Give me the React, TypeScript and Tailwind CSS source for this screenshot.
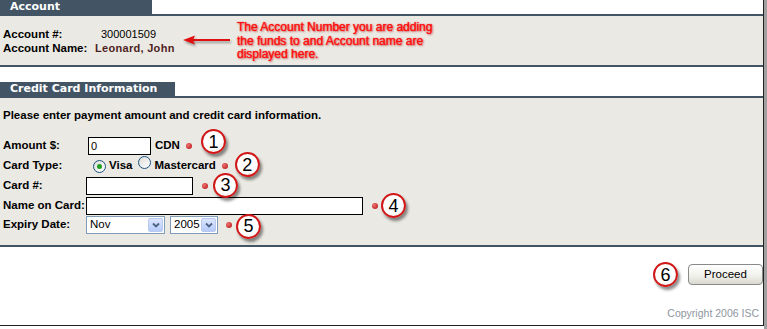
import React from "react";

const sans = "font-['Liberation_Sans',Arial,sans-serif]";

function Num({ n, className = "" }: { n: number; className?: string }) {
  return (
    <span
      className={`inline-flex h-[25px] w-[25px] shrink-0 items-center justify-center rounded-full border-[2.5px] border-[#d01818] bg-[radial-gradient(circle_at_40%_35%,#ffffff_55%,#e4e4e4)] text-[18px] leading-none text-black shadow-[2px_3px_3px_rgba(0,0,0,0.45)] -my-[4px] ${className}`}
    >
      {n}
    </span>
  );
}

function Dot({ className = "" }: { className?: string }) {
  return (
    <span
      className={`inline-block h-[6px] w-[6px] shrink-0 rounded-full bg-[radial-gradient(circle_at_35%_35%,#f07070,#b01010)] ${className}`}
    />
  );
}

function Radio({ checked }: { checked?: boolean }) {
  return (
    <span className="inline-flex h-[13px] w-[13px] shrink-0 items-center justify-center rounded-full border border-[#1c5180] bg-[linear-gradient(135deg,#dcdcd7,#ffffff)]">
      {checked && <span className="h-[5px] w-[5px] rounded-full bg-[#21a121]" />}
    </span>
  );
}

function Select({ value, width }: { value: string; width: string }) {
  return (
    <div className={`flex h-[18px] items-center border border-[#7f9db9] bg-white ${width}`}>
      <span className="flex-1 pl-[3px] text-[11.5px] leading-none text-black">{value}</span>
      <span className="m-[1px] flex h-[14px] w-[15px] items-center justify-center rounded-[2px] border border-[#b9c9ef] bg-[linear-gradient(#dbe6fe,#b6cbf8)]">
        <svg width="8" height="6" viewBox="0 0 8 6">
          <path d="M1 1.5 L4 4.5 L7 1.5" fill="none" stroke="#4d6185" strokeWidth="1.8" />
        </svg>
      </span>
    </div>
  );
}

function Tab({ label, width }: { label: string; width: string }) {
  return (
    <div className="flex flex-col">
      <div className={`h-[14px] bg-[#435565] pl-[10px] font-['DejaVu_Sans',Verdana,sans-serif] text-[11px] font-bold leading-[14px] text-white ${width}`}>
        {label}
      </div>
      <div className="h-[2px] w-full bg-[#435565]" />
    </div>
  );
}

export default function App() {
  return (
    <div className={`flex h-[329px] w-[767px] bg-white ${sans}`}>
      <div className="flex h-[326px] w-[764px] flex-col border-r border-b border-[#222]">
        <Tab label="Account" width="w-[152px]" />
        <div className="flex h-[49px] items-start bg-[#ebe9e3] px-[3px]">
          <div className="flex w-[92px] flex-col pt-[11px] text-[11.5px] font-bold leading-[14px] text-black">
            <span>Account #:</span>
            <span>Account Name:</span>
          </div>
          <div className="flex w-[88px] flex-col pt-[11px] text-[11px] leading-[14px]">
            <span className="pl-[6px] text-black">300001509</span>
            <span className="font-bold tracking-[0.3px] text-[#4d1f1f]">Leonard, John</span>
          </div>
          <svg width="50" height="10" viewBox="0 0 50 10" className="mt-[19px] drop-shadow-[1px_2px_1px_rgba(0,0,0,0.35)]">
            <path d="M47 5 H8" stroke="#e01010" strokeWidth="2.2" />
            <path d="M0 5 L12 0.5 L10 5 L12 9.5 Z" fill="#e01010" />
          </svg>
          <div className="ml-[4px] pt-[5px] text-[12px] leading-[13.5px] text-[#ff1010] [text-shadow:0_0_1px_#ff1010,1px_1px_2px_rgba(150,0,0,0.6)]">
            The Account Number you are adding
            <br />
            the funds to and Account name are
            <br />
            displayed here.
          </div>
        </div>
        <div className="h-[2px] bg-[#435565]" />
        <div className="h-[15px]" />
        <Tab label="Credit Card Information" width="w-[175px]" />
        <div className="flex h-[147px] flex-col bg-[#ebe9e3] px-[3px] pt-[10px] text-[11.5px] text-black">
          <div className="font-bold leading-[14px]">
            Please enter payment amount and credit card information.
          </div>
          <div className="mt-[14px] flex h-[19px] items-center">
            <span className="w-[85px] font-bold">Amount $:</span>
            <div className="h-[18px] w-[63px] border border-black bg-white pl-[2px] text-[11px] leading-[16px]">0</div>
            <span className="ml-[4px] font-bold">CDN</span>
            <Dot className="ml-[6px]" />
            <Num n={1} className="ml-[9px] -translate-y-[4px]" />
          </div>
          <div className="flex h-[21px] items-center">
            <span className="w-[83px] font-bold">Card Type:</span>
            <span className="ml-[7px]">
              <Radio checked />
            </span>
            <span className="ml-[3px] font-bold">Visa</span>
            <span className="ml-[6px]">
              <Radio />
            </span>
            <span className="ml-[3px] font-bold">Mastercard</span>
            <Dot className="ml-[6px]" />
            <Num n={2} className="ml-[7px] -translate-y-[1px]" />
          </div>
          <div className="flex h-[20px] items-center">
            <span className="w-[83px] font-bold">Card #:</span>
            <div className="h-[18px] w-[107px] border border-black bg-white" />
            <Dot className="ml-[9px]" />
            <Num n={3} className="ml-[5px] -translate-y-[1px]" />
          </div>
          <div className="flex h-[19px] items-center">
            <span className="w-[83px] font-bold">Name on Card:</span>
            <div className="h-[18px] w-[277px] border border-black bg-white" />
            <Dot className="ml-[9px]" />
            <Num n={4} className="ml-[3px]" />
          </div>
          <div className="flex h-[20px] items-center">
            <span className="w-[83px] font-bold">Expiry Date:</span>
            <Select value="Nov" width="w-[79px]" />
            <span className="ml-[5px]">
              <Select value="2005" width="w-[48px]" />
            </span>
            <Dot className="ml-[8px]" />
            <Num n={5} className="ml-[4px] translate-y-[1px]" />
          </div>
        </div>
        <div className="h-[2px] bg-[#435565]" />
        <div className="flex flex-1 flex-col">
          <div className="mt-[17px] flex items-center justify-end">
            <Num n={6} className="mr-[10px]" />
            <button className="h-[21px] w-[75px] rounded-[4px] border border-[#8a8a8a] bg-[linear-gradient(#ffffff,#f0f0ea_60%,#d8d8d0)] text-[11.5px] leading-none text-black">
              Proceed
            </button>
          </div>
          <div className="mt-[22px] pr-[4px] text-right text-[10.5px] leading-[12px] text-[#8e95a0]">
            Copyright 2006 ISC
          </div>
        </div>
      </div>
      <div className="h-[329px] w-[3px] bg-[#a0a0a0]" />
    </div>
  );
}
